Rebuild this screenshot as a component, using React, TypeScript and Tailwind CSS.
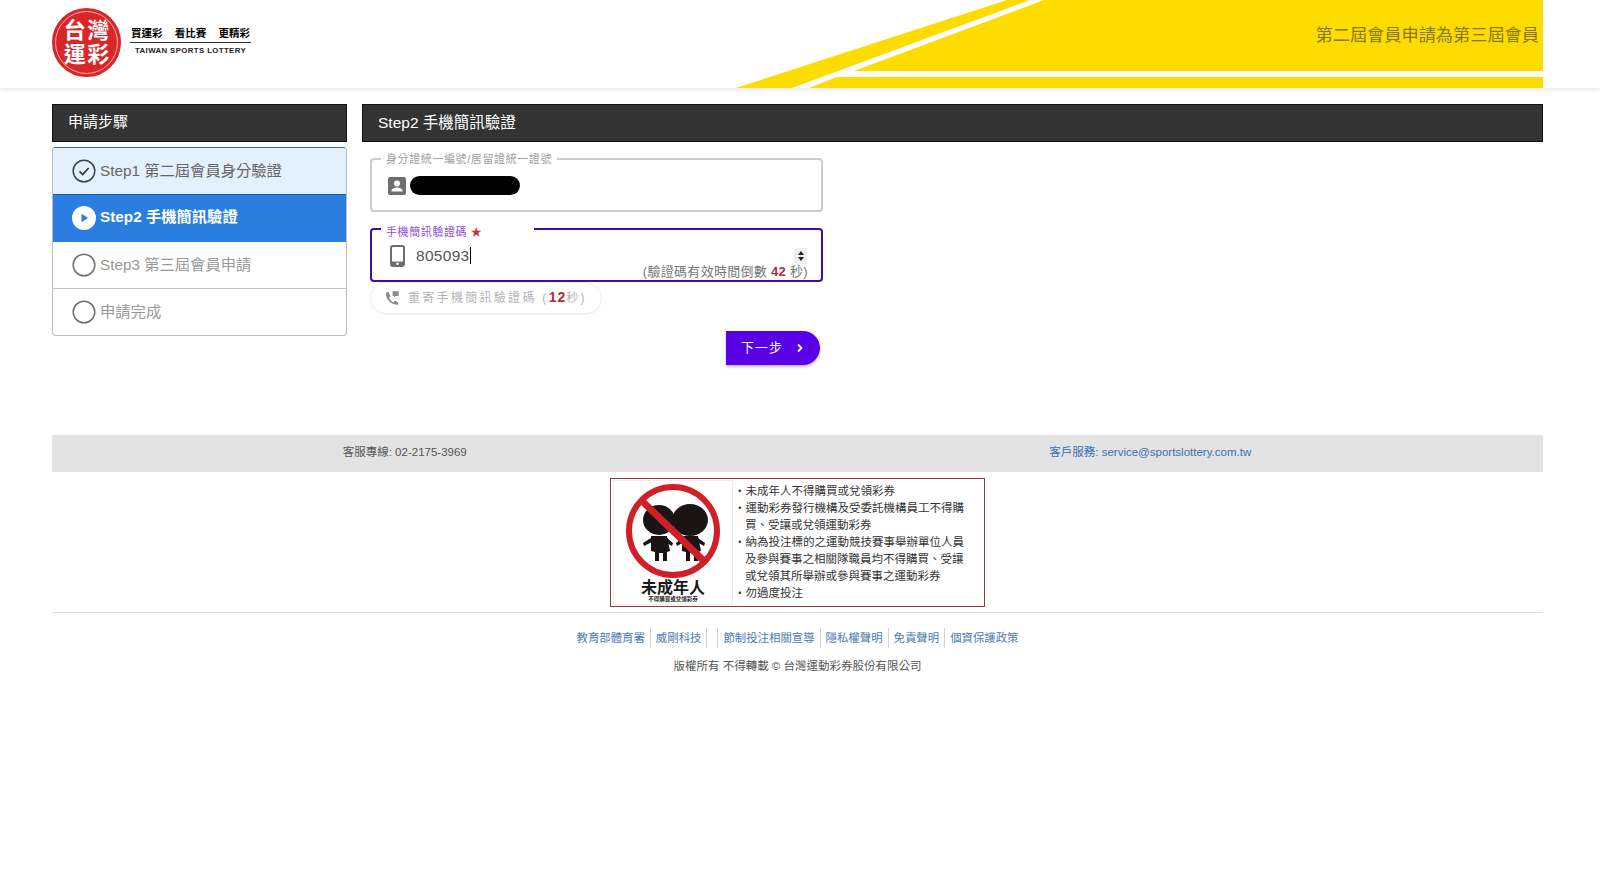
import React from "react";

const font = { fontFamily: '"Liberation Sans","Noto Sans CJK TC",sans-serif' };

function StepIcon({ kind }: { kind: "done" | "active" | "todo" }) {
  if (kind === "active")
    return (
      <svg width="24" height="24" viewBox="0 0 24 24" className="shrink-0">
        <circle cx="12" cy="12" r="12" fill="#fff" />
        <path d="M9.5 7.8 16 12l-6.500 4.200z" fill="#2a7de1" />
      </svg>
    );
  return (
    <svg width="24" height="24" viewBox="0 0 24 24" className="shrink-0" fill="none">
      <circle cx="12" cy="12" r="10.800" stroke={kind === "done" ? "#3c4550" : "#6f6f6f"} strokeWidth="1.500" />
      {kind === "done" && <path d="M7.500 12.300l3.200 3.200 6-6.500" stroke="#2c3540" strokeWidth="1.700" />}
    </svg>
  );
}

function Step({ kind, children, cls }: { kind: "done" | "active" | "todo"; children: React.ReactNode; cls: string }) {
  return (
    <div className={`flex items-center pl-[19px] gap-[4px] text-[15.300px] ${cls}`}>
      <StepIcon kind={kind} />
      <span className="whitespace-nowrap">{children}</span>
    </div>
  );
}

function NoMinor() {
  return (
    <div className="w-[120px] h-[125px] border border-[#eeeeee] flex flex-col items-center shrink-0">
      <svg width="118" height="99" viewBox="0 0 118 99" className="shrink-0">
        <ellipse cx="45" cy="39" rx="16" ry="15" fill="#1b1414" />
        <ellipse cx="76" cy="39" rx="18" ry="16" fill="#1b1414" />
        <path d="M37 55h16l3 15-3 1v9h-4v-8h-4v8h-4v-9l-4-1z" fill="#1b1414" />
        <path d="M68 55h16l3 15-3 1v9h-4v-8h-4v8h-4v-9l-4-1z" fill="#1b1414" />
        <path d="M37 57l-8 5 1 3 8-4zM53 57l6 5-1 3-7-4zM68 57l-6 5 1 3 7-4zM84 57l7 5-1 3-7-4z" fill="#1b1414" />
        <circle cx="59" cy="50" r="44" fill="none" stroke="#cf2027" strokeWidth="6" />
        <path d="M27 19 91 81" stroke="#cf2027" strokeWidth="7" />
      </svg>
      <div className="text-[16px] leading-[17px] font-bold text-[#1a1a1a] -mt-[1px]">未成年人</div>
      <div className="text-[5.500px] leading-[7px] font-bold text-[#222]">不得購買或兌領彩券</div>
    </div>
  );
}

export default function App() {
  const links = ["教育部體育署", "威剛科技", "", "節制投注相關宣導", "隱私權聲明", "免責聲明", "個資保護政策"];
  return (
    <div style={font} className="w-[1600px] h-[888px] bg-white overflow-hidden">
      <header className="relative h-[88px] pl-[52px] pt-[8px] flex items-start shadow-[0_3px_3px_#f0f0f0]">
        <svg width="1600" height="88" viewBox="0 0 1600 88" className="absolute left-0 top-0">
          <path d="M736 88 1007 0h23L792 88z" fill="#ffdc00" />
          <path d="M1044 0 854 71h689V0z" fill="#ffdc00" />
          <path d="M809 88l28-11h706v11z" fill="#ffdc00" />
        </svg>
        <div className="relative w-[69px] h-[69px] rounded-full bg-[#d8262a] border-[3px] border-[#d8262a] shrink-0">
          <div className="w-full h-full rounded-full border border-[#f4b4b0] grid grid-cols-2 place-items-center content-center px-[7px] text-white text-[22px] leading-[24px] font-bold">
            <span>台</span><span>灣</span><span>運</span><span>彩</span>
          </div>
        </div>
        <div className="relative ml-[9px] mt-[18px] w-[121px] text-black">
          <div className="flex justify-between px-[1px] text-[10.500px] leading-[15px] font-bold pb-[1px] border-b border-[#333]">
            <span>買運彩</span><span>看比賽</span><span>更精彩</span>
          </div>
          <div className="text-center text-[7.800px] leading-[15px] font-bold tracking-[0.4px] whitespace-nowrap text-[#222]">TAIWAN SPORTS LOTTERY</div>
        </div>
        <div className="relative ml-auto mr-[61px] mt-[16px] text-[17.200px] leading-[22px] text-[#85761a]">第二屆會員申請為第三屆會員</div>
      </header>

      <div className="ml-[52px] w-[1491px]">
        <div className="flex gap-[15px] mt-[16px]">
          <aside className="w-[295px] shrink-0">
            <div className="h-[38px] bg-[#333333] border border-[#111] text-white text-[15px] flex items-center pl-[15px] pb-[2px]">申請步驟</div>
            <div className="mt-[5px] rounded-[4px] border border-[#bdbdbd] border-t-[#2f6ea5] overflow-hidden">
              <Step kind="done" cls="h-[47px] bg-[#e3f0fd] text-[#666] border-b border-[#1f5c98]">Step1 第二屆會員身分驗證</Step>
              <Step kind="active" cls="h-[47px] pb-[2px] bg-[#2a7de1] text-white font-bold">Step2 手機簡訊驗證</Step>
              <Step kind="todo" cls="h-[47px] text-[#999] border-b border-[#c4c4c4]">Step3 第三屆會員申請</Step>
              <Step kind="todo" cls="h-[46px] text-[#999]">申請完成</Step>
            </div>
          </aside>

          <main className="flex-1">
            <div className="h-[38px] bg-[#333333] border border-[#111] text-white text-[15.500px] flex items-center pl-[15px]">Step2 手機簡訊驗證</div>
            <div className="ml-[8px] w-[453px] mt-[10px]">
              <fieldset className="h-[60px] border-2 border-[#cccccc] rounded-[4px]">
                <legend className="ml-[9px] px-[5px] text-[11px] tracking-[0.6px] leading-[14px] text-[#a0a0a0]">身分證統一編號/居留證統一證號</legend>
                <div className="flex items-center pl-[16px] mt-[10px] gap-[4px]">
                  <svg width="18" height="18" viewBox="0 0 18 18" className="shrink-0">
                    <path fillRule="evenodd" d="M2 0h14a2 2 0 0 1 2 2v14a2 2 0 0 1-2 2H2a2 2 0 0 1-2-2V2a2 2 0 0 1 2-2zm7 3.500a3 3 0 1 0 0 6 3 3 0 0 0 0-6zM3.500 14.500h11v-1c0-2-3.500-3-5.500-3s-5.500 1-5.500 3z" fill="#6e6e6e" />
                  </svg>
                  <div className="w-[110px] h-[19px] rounded-full bg-black" />
                </div>
              </fieldset>

              <fieldset className="mt-[10px] h-[60px] border-2 border-[#3f0ca8] rounded-[4px]">
                <legend className="ml-[9px] pl-[5px] w-[153px] text-[11px] tracking-[0.6px] leading-[14px] text-[#8d4fd8]">
                  <span className="relative top-[3px]">手機簡訊驗證碼 <span className="text-[#c8323c]">★</span></span>
                </legend>
                <div className="pl-[18px] pr-[13px]">
                  <div className="flex items-center h-[21px] mt-[9px]">
                    <svg width="15" height="22" viewBox="0 0 15 22" className="shrink-0" fill="none">
                      <rect x="1" y="1" width="13" height="20" rx="2" stroke="#6e6e6e" strokeWidth="2" />
                      <rect x="1" y="16.500" width="13" height="4.500" fill="#6e6e6e" />
                      <circle cx="7.500" cy="18.700" r="1.200" fill="#fff" />
                    </svg>
                    <span className="ml-[11px] text-[15.500px] tracking-[0.3px] text-[#555] leading-[20px]">805093</span>
                    <span className="w-px h-[17px] bg-black" />
                    <div className="ml-auto mr-[1px] w-[13px] h-[16px] bg-[#f0f0f0] flex flex-col items-center justify-center gap-[2px]">
                      <span className="w-0 h-0 border-x-[3px] border-x-transparent border-b-[4px] border-b-[#222]" />
                      <span className="w-0 h-0 border-x-[3px] border-x-transparent border-t-[4px] border-t-[#222]" />
                    </div>
                  </div>
                  <div className="-mt-[1px] text-right text-[13px] tracking-[0.3px] leading-[14px] text-[#777] whitespace-nowrap">
                    (驗證碼有效時間倒數 <b className="text-[#b02a3c]">42</b> 秒)
                  </div>
                </div>
              </fieldset>

              <div className="w-[232px] h-[32px] rounded-full border border-[#eeeeee] flex items-center pl-[13px] pb-[1px] gap-[8px] shadow-[0_1px_1px_#f5f5f5]">
                <svg width="16" height="16" viewBox="0 0 24 24" className="shrink-0" fill="#8a8a8a">
                  <path d="M6.600 3 3 3.800c-.4 6.600 2 10.500 5 13.400 3 2.800 7 4.800 12.800 4.800l.8-3.700-5-2.200-2.500 2.400c-3-1.500-5.200-3.700-6.700-6.700l2.400-2.400z" />
                  <path d="M13 2h9v7h-5l-2 2V9h-2z" />
                </svg>
                <span className="text-[12px] tracking-[2.300px] text-[#b5b5b5] whitespace-nowrap">
                  重寄手機簡訊驗證碼 (<b className="text-[14px] tracking-[1px] text-[#b02a3c]">12</b>秒)
                </span>
              </div>

              <div className="flex justify-end pr-[3px] mt-[17px]">
                <button className="w-[94px] h-[34px] bg-[#5a00e6] text-white text-[13px] rounded-r-full flex items-center pl-[15px] shadow-[0_2px_3px_#c9b6f0] tracking-[1px]">
                  下一步
                  <svg width="10" height="10" viewBox="0 0 10 10" fill="none" className="ml-[12px]">
                    <path d="M3 1.500 6.500 5 3 8.500" stroke="#fff" strokeWidth="1.800" />
                  </svg>
                </button>
              </div>
            </div>
          </main>
        </div>

        <div className="mt-[70px] h-[37px] pb-[2px] bg-[#e3e3e3] grid grid-cols-2 items-center text-[11.500px]">
          <div className="text-center pr-[40px] text-[#555]">客服專線: 02-2175-3969</div>
          <div className="text-center pr-[40px] text-[#3a6fb0]">客戶服務: service@sportslottery.com.tw</div>
        </div>

        <div className="flex justify-center mt-[6px]">
          <div className="w-[375px] h-[129px] border border-[#8a3a40] flex items-center pl-[2px] gap-[1px]">
            <NoMinor />
            <ul className="text-[11.500px] leading-[17px] text-[#333] whitespace-nowrap">
              <li>・未成年人不得購買或兌領彩券</li>
              <li>・運動彩券發行機構及受委託機構員工不得購</li>
              <li className="pl-[11px]">買、受讓或兌領運動彩券</li>
              <li>・納為投注標的之運動競技賽事舉辦單位人員</li>
              <li className="pl-[11px]">及參與賽事之相關隊職員均不得購買、受讓</li>
              <li className="pl-[11px]">或兌領其所舉辦或參與賽事之運動彩券</li>
              <li>・勿過度投注</li>
            </ul>
          </div>
        </div>

        <div className="mt-[5px] border-t border-[#dddddd] pt-[15px] flex justify-center text-[11.400px] leading-[20px] text-[#4a7ab5]">
          {links.map((l, i) => (
            <span key={i} className={`px-[5px] ${i < links.length - 1 ? "border-r border-[#d5d5d5]" : ""}`}>{l}</span>
          ))}
        </div>
        <div className="mt-[11px] text-center text-[11.500px] leading-[14px] text-[#555]">版權所有 不得轉載 © 台灣運動彩券股份有限公司</div>
      </div>
    </div>
  );
}
